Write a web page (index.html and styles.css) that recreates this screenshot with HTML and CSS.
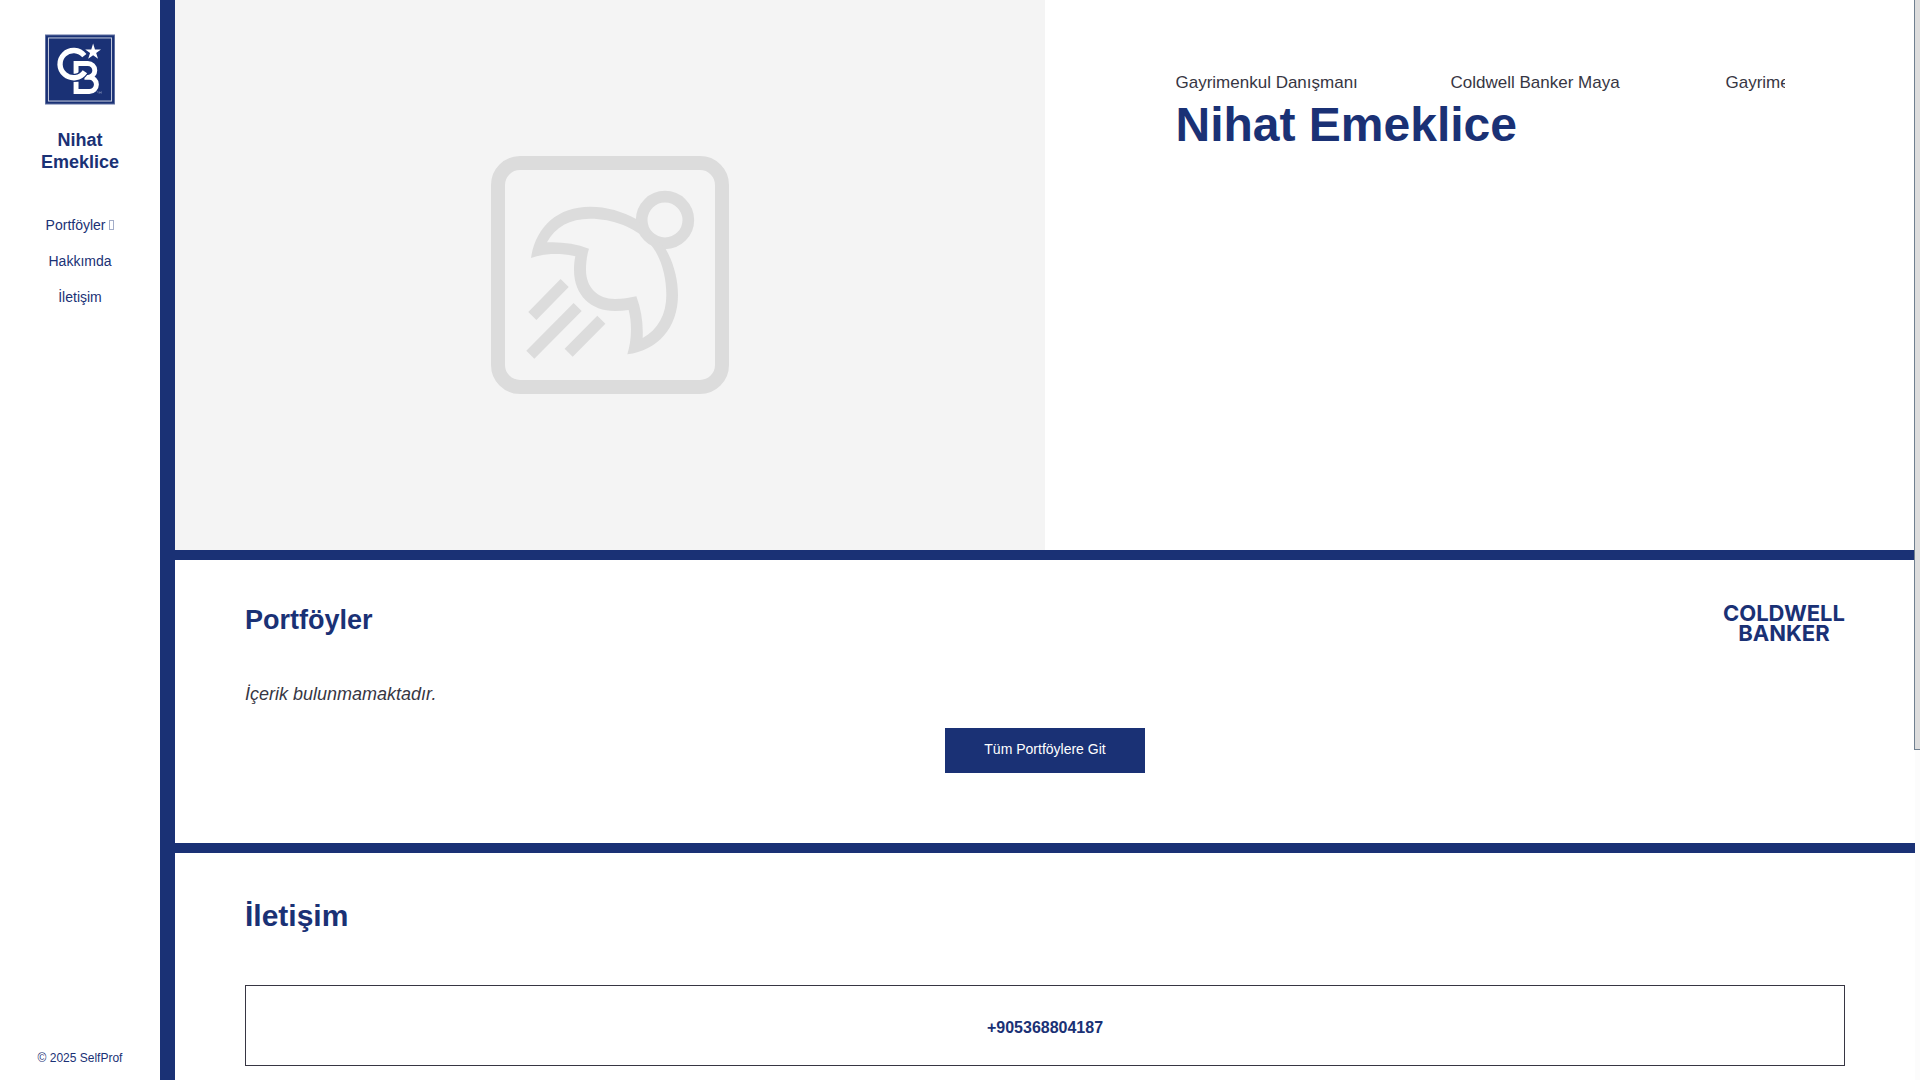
FILE: index.html
```html
<!DOCTYPE html>
<html lang="tr">
<head>
    <meta charset="UTF-8">
    <meta name="viewport" content="width=device-width, initial-scale=1.0">
    <title>Nihat Emeklice</title>
    <link rel="stylesheet" href="styles.css">
</head>
<body>
    <aside class="sidebar">
        <a class="logo" href="#" aria-label="Coldwell Banker">
            <svg width="70" height="71" viewBox="0 0 71 71">
                <rect x="0.5" y="0.5" width="70" height="70" fill="#1a3175" stroke="#5f6f9f"/>
                <rect x="3.5" y="3.5" width="64" height="64" fill="none" stroke="#c9cfe0"/>
                <path d="M31.5 42V29.500H43.500a7 7 0 0 1 0 14H40M40 43.500H45a7.150 7.150 0 0 1 0 14.300H31.500V48" fill="none" stroke="#fff" stroke-width="5"/>
                <path d="M39.900 21.500A13.800 13.800 0 1 0 40.500 37.700" fill="none" stroke="#1a3175" stroke-width="8"/>
                <path d="M39.900 21.500A13.800 13.800 0 1 0 40.500 37.700" fill="none" stroke="#fff" stroke-width="5.400"/>
                <path d="M48.800 9.200l1.900 5.900h6.100l-4.900 3.600 1.900 5.900-5-3.600-5 3.600 1.900-5.900-4.900-3.600h6.100z" fill="#fff"/>
                <path d="M52.500 57.500l1.500 1.500m1 1v-2l1 1 1-1v2" fill="none" stroke="#9aa5c5" stroke-width="0.6"/>
            </svg>
        </a>
        <h3 class="profile-name">Nihat Emeklice</h3>
        <nav class="menu">
            <a href="#portfoyler">Portföyler <span class="menu-icon"></span></a>
            <a href="#hakkimda">Hakkımda</a>
            <a href="#iletisim">İletişim</a>
        </nav>
        <p class="copyright">© 2025 SelfProf</p>
    </aside>

    <main class="content">
        <section class="hero">
            <div class="hero-image">
                <svg width="238" height="238" viewBox="0 0 714 714" fill="none" stroke="#dcdcdc">
                    <rect x="21" y="21" width="672" height="672" rx="66" stroke-width="42"/>
                    <circle cx="522" cy="192" r="70" stroke-width="35"/>
                    <path fill="#dcdcdc" stroke="none" fill-rule="evenodd" d="M120 306C134 212 200 152 297 152C347 152 395 166 437 190L524 279C548 320 561 370 561 417C561 515 500 584 409 595C420 560 425 510 413 462C400 464 386 465 372 465C300 465 249 418 249 342C249 328 250 314 253 301C208 291 160 292 120 306ZM168 259C192 213 237 188 297 188C366 188 430 214 470 254C505 292 526 350 526 417C526 475 501 521 455 546C457 502 451 460 436 421C415 426 394 429 372 429C320 429 285 394 285 342C285 318 288 297 294 278C254 263 212 257 168 259Z"/>
                    <path d="M221 381L124 480M260 453L118 596M331 491L233 590" stroke-width="34"/>
                </svg>
            </div>
            <div class="hero-text">
                <div class="ticker">
                    <span>Gayrimenkul Danışmanı</span>
                    <span>Coldwell Banker Maya</span>
                    <span>Gayrimenkul Danışmanı</span>
                </div>
                <h1>Nihat Emeklice</h1>
            </div>
        </section>

        <section class="section" id="portfoyler">
            <div class="section-head">
                <h2>Portföyler</h2>
                <div class="wordmark">COLDWELL<br>BANKER</div>
            </div>
            <p class="empty">İçerik bulunmamaktadır.</p>
            <a class="button" href="#portfoyler">Tüm Portföylere Git</a>
        </section>

        <section class="section contact" id="iletisim">
            <h2>İletişim</h2>
            <div class="contact-box">
                <a href="tel:+905368804187">+905368804187</a>
            </div>
        </section>
    </main>

    <div class="scrollbar"><div class="scrollbar-thumb"></div></div>
</body>
</html>
```
FILE: styles.css
```css
* {
    box-sizing: border-box;
}

body {
    display: flex;
    min-height: 100vh;
    margin: 0;
    font-family: "Liberation Sans", Arial, sans-serif;
    color: #373643;
    background-color: #fff;
}

a {
    color: #1a3175;
    text-decoration: none;
}

h1,
h2,
h3,
p {
    margin: 0;
}

h1,
h2,
h3 {
    color: #1a3175;
}

/* Sidebar */
.sidebar {
    position: sticky;
    top: 0;
    display: flex;
    flex-direction: column;
    align-items: center;
    width: 160px;
    height: 100vh;
    padding: 34px 30px 14px;
    text-align: center;
}

.logo svg {
    display: block;
}

.profile-name {
    margin-top: 24px;
    font-size: 18px;
    line-height: 22px;
}

.menu {
    display: flex;
    flex-direction: column;
    gap: 20px;
    margin-top: 44px;
    font-size: 14px;
    line-height: 16px;
    white-space: nowrap;
}

.menu-icon {
    display: inline-block;
    width: 5px;
    height: 10px;
    border: 1px solid #a3adc8;
}

.copyright {
    margin-top: auto;
    font-size: 12px;
    line-height: 16px;
    color: #1a3175;
    white-space: nowrap;
}

/* Content */
.content {
    flex: 1;
    min-width: 0;
    border-left: 15px solid #1a3175;
}

.hero {
    display: flex;
    height: 550px;
}

.hero-image {
    display: flex;
    align-items: center;
    justify-content: center;
    width: 50%;
    background-color: #f4f4f4;
}

.hero-text {
    width: 50%;
    padding: 73px 7.5% 0;
}

.ticker {
    display: flex;
    overflow: hidden;
    font-size: 17px;
    line-height: 20px;
    white-space: nowrap;
}

.ticker span {
    flex: 0 0 275px;
}

h1 {
    margin-top: 4px;
    font-size: 48px;
    line-height: 56px;
}

.section {
    padding: 43px 70px 70px;
    border-top: 10px solid #1a3175;
}

.section-head {
    display: flex;
    align-items: flex-start;
    justify-content: space-between;
}

.section-head h2 {
    font-size: 27px;
    line-height: 34px;
}

.wordmark {
    font-family: Inter, sans-serif;
    font-size: 22px;
    font-weight: 700;
    line-height: 20px;
    color: #1a3175;
    text-align: center;
}

.empty {
    margin-top: 41px;
    font-size: 18px;
    font-style: italic;
    line-height: 20px;
}

.button {
    display: block;
    width: 200px;
    margin: 24px auto 0;
    padding: 13px 0 16px;
    background-color: #1a3175;
    color: #fff;
    font-size: 14px;
    line-height: 16px;
    text-align: center;
}

.contact {
    padding-bottom: 14px;
}

.contact h2 {
    font-size: 30px;
    line-height: 40px;
}

.contact-box {
    margin-top: 49px;
    padding: 32px 0 27px;
    border: 1px solid #373643;
    font-size: 16px;
    font-weight: bold;
    line-height: 20px;
    text-align: center;
}

/* Scrollbar */
.scrollbar {
    position: sticky;
    top: 0;
    width: 5px;
    height: 100vh;
    background-color: #fcfcfc;
}

.scrollbar-thumb {
    height: 749px;
    background-color: #dddddd;
    outline: 1px solid #708090;
}
```
